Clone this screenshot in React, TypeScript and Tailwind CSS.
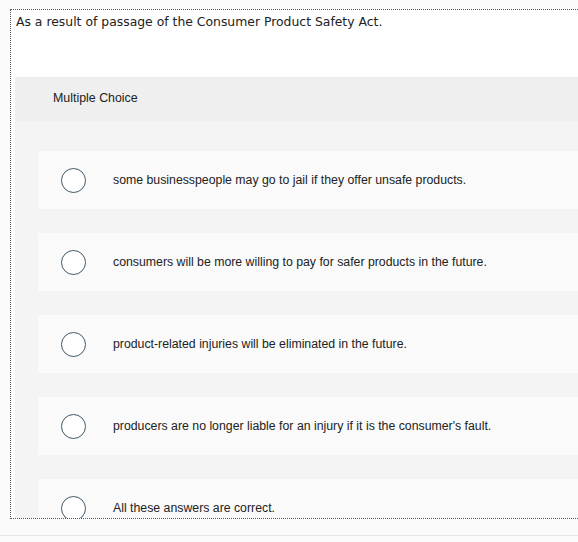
const options = [
  "some businesspeople may go to jail if they offer unsafe products.",
  "consumers will be more willing to pay for safer products in the future.",
  "product-related injuries will be eliminated in the future.",
  "producers are no longer liable for an injury if it is the consumer's fault.",
  "All these answers are correct.",
];

export default function App() {
  return (
    <div className="w-[578px] h-[542px] overflow-hidden bg-[#fbfbfb]">
      <div className="pt-[9px] pl-[10px]">
        <div className="w-[620px] h-[510px] overflow-hidden border border-dotted border-[#4b5c68] bg-white">
          <p
            className="pl-[5px] pt-[3px] h-[67px] text-[12.4px] text-[#222]"
            style={{ fontFamily: '"DejaVu Sans", Verdana, sans-serif' }}
          >
            As a result of passage of the Consumer Product Safety Act.
          </p>
          <div className="ml-[4px] bg-[#f4f4f4]">
            <div className="h-[44px] bg-[#efefef] border-t border-[#ebebeb] flex items-center pl-[38px] pb-[2px]">
              <span className="text-[12.4px] text-[#222]" style={{ fontFamily: '"Liberation Sans", Arial, sans-serif' }}>
                Multiple Choice
              </span>
            </div>
            <div className="pl-[23px] pt-[30px] flex flex-col gap-[24px]">
              {options.map((o) => (
                <div key={o} className="h-[58px] shrink-0 bg-[#fafafa] flex items-center pl-[23px]">
                  <div className="w-[25px] h-[25px] rounded-full border-[1.5px] border-[#3e5868] bg-white shrink-0" />
                  <span
                    className="ml-[27px] text-[12.3px] text-[#222]"
                    style={{ fontFamily: '"Liberation Sans", Arial, sans-serif' }}
                  >
                    {o}
                  </span>
                </div>
              ))}
            </div>
          </div>
        </div>
      </div>
      <div className="mt-[16px] border-t border-[#e6e6e6]" />
    </div>
  );
}
